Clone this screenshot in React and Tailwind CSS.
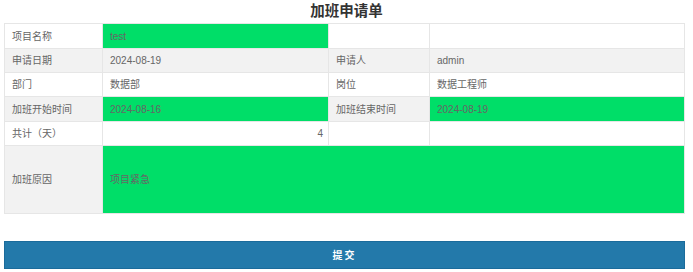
export default function App() {
    const label = 'border border-[#e6e6e6] pl-[7px] text-left font-normal';
    const cell = 'border border-[#e6e6e6] pl-[7px]';
    const green = 'border border-[#e6e6e6] bg-[#00de68] pl-[7px]';

    return (
        <div
            className="w-[693px] h-[272px] bg-white text-[10px] text-[#666]"
            style={{ fontFamily: '"Liberation Sans", "Noto Sans CJK SC", sans-serif' }}
        >
            <div className="h-[23px] flex items-center justify-center text-[14.5px] font-bold text-[#333]">
                加班申请单
            </div>
            <div className="ml-[4px] w-[681px]">
                <table className="w-full border-collapse table-fixed">
                    <colgroup>
                        <col className="w-[98px]" />
                        <col className="w-[226px]" />
                        <col className="w-[101px]" />
                        <col />
                    </colgroup>
                    <tbody>
                        <tr className="h-[25px]">
                            <td className={label}>项目名称</td>
                            <td className={green}>test</td>
                            <td className={cell}></td>
                            <td className={cell}></td>
                        </tr>
                        <tr className="h-[24px] bg-[#f2f2f2]">
                            <td className={label}>申请日期</td>
                            <td className={cell}>2024-08-19</td>
                            <td className={label}>申请人</td>
                            <td className={cell}>admin</td>
                        </tr>
                        <tr className="h-[24px]">
                            <td className={label}>部门</td>
                            <td className={cell}>数据部</td>
                            <td className={label}>岗位</td>
                            <td className={cell}>数据工程师</td>
                        </tr>
                        <tr className="h-[25px] bg-[#f2f2f2]">
                            <td className={label}>加班开始时间</td>
                            <td className={green}>2024-08-16</td>
                            <td className={label}>加班结束时间</td>
                            <td className={green}>2024-08-19</td>
                        </tr>
                        <tr className="h-[24px]">
                            <td className={label}>共计（天）</td>
                            <td className="border border-[#e6e6e6] pr-[5px] text-right">4</td>
                            <td className={cell}></td>
                            <td className={cell}></td>
                        </tr>
                        <tr className="h-[68px] bg-[#f2f2f2]">
                            <td className={label}>加班原因</td>
                            <td className={green} colSpan={3}>项目紧急</td>
                        </tr>
                    </tbody>
                </table>
                <button className="mt-[27px] w-full h-[28px] bg-[#2379aa] border border-[#1b6b9b] text-white font-bold text-[10px] tracking-[2px]">
                    提交
                </button>
            </div>
        </div>
    );
}
